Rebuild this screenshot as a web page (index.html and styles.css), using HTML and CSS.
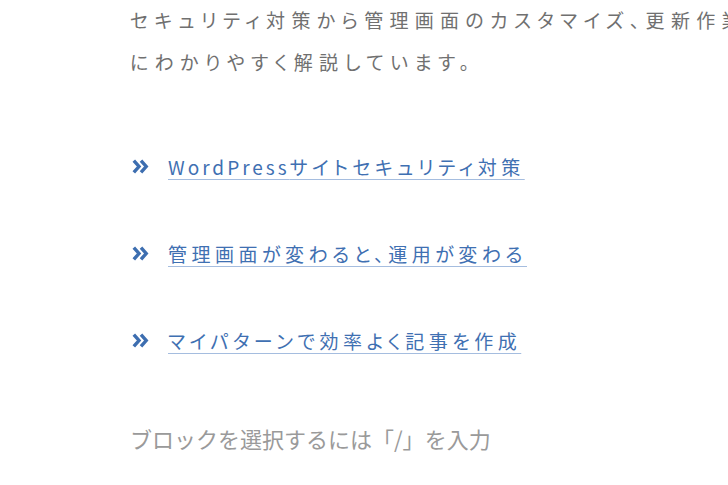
FILE: index.html
```html
<!DOCTYPE html>
<html lang="ja">
<head>
<meta charset="utf-8">
<link rel="stylesheet" href="styles.css">
</head>
<body>
<div class="content">
  <p class="lead">セキュリティ対策から管理画面のカスタマイズ、更新作業まで、<br>にわかりやすく解説しています。</p>
  <ul class="links">
    <li><svg class="arrow" viewBox="0 0 17 15" width="17" height="15"><path d="M1.8 1.6 L7 7.5 L1.8 13.4 M9 1.6 L14.2 7.5 L9 13.4" fill="none" stroke="#3d6eb0" stroke-width="3.4"/></svg><a href="#"><span class="latin">WordPress</span>サイトセキュリティ対策</a></li>
    <li><svg class="arrow" viewBox="0 0 17 15" width="17" height="15"><path d="M1.8 1.6 L7 7.5 L1.8 13.4 M9 1.6 L14.2 7.5 L9 13.4" fill="none" stroke="#3d6eb0" stroke-width="3.4"/></svg><a href="#">管理画面が変わると、運用が変わる</a></li>
    <li><svg class="arrow" viewBox="0 0 17 15" width="17" height="15"><path d="M1.8 1.6 L7 7.5 L1.8 13.4 M9 1.6 L14.2 7.5 L9 13.4" fill="none" stroke="#3d6eb0" stroke-width="3.4"/></svg><a href="#">マイパターンで効率よく記事を作成</a></li>
  </ul>
  <p class="placeholder">ブロックを選択するには「/」を入力</p>
</div>
</body>
</html>
```
FILE: styles.css
```css
html, body {
  margin: 0;
  padding: 0;
  background: #fff;
  overflow: hidden;
}
body {
  width: 728px;
  height: 485px;
  font-family: "Noto Sans CJK JP", "Noto Sans", sans-serif;
}
.content {
  padding-left: 130px;
  width: 598px;
  overflow: hidden;
}
.lead {
  margin: -1px 0 0 0;
  font-size: 19px;
  line-height: 42px;
  letter-spacing: 6.3px;
  font-feature-settings: "palt";
  color: #707070;
  white-space: nowrap;
}
.links {
  list-style: none;
  margin: 68px 0 0 0;
  padding: 0;
}
.links li {
  display: flex;
  align-items: center;
  height: 30px;
  margin-bottom: 57px;
}
.links li:last-child {
  margin-bottom: 0;
}
.arrow {
  margin-left: 2px;
  margin-right: 19px;
  flex: none;
}
.links a {
  font-size: 19px;
  letter-spacing: 4.5px;
  font-feature-settings: "palt";
  color: #3f70b2;
  text-decoration: underline;
  text-decoration-color: #a5bddf;
  text-underline-offset: 4px;
  white-space: nowrap;
}
.latin {
  letter-spacing: 3px;
}
.placeholder {
  margin: 68px 0 0 0;
  font-size: 22px;
  line-height: 30px;
  color: #9a9a9a;
  white-space: nowrap;
}
```
